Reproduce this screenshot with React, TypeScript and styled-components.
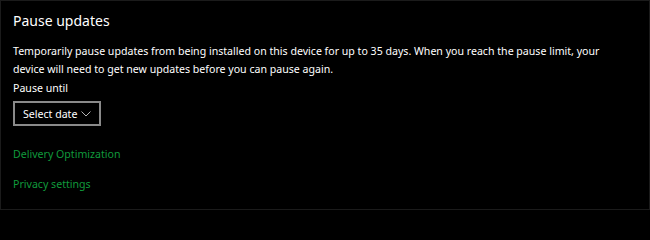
import styled, { createGlobalStyle } from "styled-components";

const GlobalStyle = createGlobalStyle`
  html, body {
    margin: 0;
    padding: 0;
    background: #000;
  }
  body {
    font-family: "Noto Sans", "Open Sans", sans-serif;
  }
`;

export default function App() {
  return (
    <>
      <GlobalStyle />
      <Page>
        <Heading>Pause updates</Heading>
        <Description>
          Temporarily pause updates from being installed on this device for up
          to 35 days. When you reach the pause limit, your
          <br />
          device will need to get new updates before you can pause again.
        </Description>
        <FieldLabel>Pause until</FieldLabel>
        <DateSelect>
          <span>Select date</span>
          <svg width="10" height="6" viewBox="0 0 10 6">
            <path d="M0.5 0.5 L5 5 L9.5 0.5" fill="none" stroke="#b5b5b5" strokeWidth="1" />
          </svg>
        </DateSelect>
        <Links>
          <LinkText>Delivery Optimization</LinkText>
          <LinkText>Privacy settings</LinkText>
        </Links>
      </Page>
    </>
  );
}

const Page = styled.div`
  box-sizing: border-box;
  width: 650px;
  height: 210px;
  padding: 10px 12px 0 12px;
  border: 1px solid #1b1b1b;
  background: #000;
  color: #fff;
  overflow: hidden;
`;
const Heading = styled.h2`
  margin: 0;
  font-size: 14px;
  font-weight: 400;
  line-height: 20px;
`;
const Description = styled.p`
  margin: 11px 0 0 0;
  width: 622px;
  font-size: 10.6px;
  line-height: 18px;
  white-space: normal;
`;
const FieldLabel = styled.div`
  margin-top: 1px;
  font-size: 10.6px;
  line-height: 18px;
`;
const DateSelect = styled.button`
  box-sizing: border-box;
  margin-top: 4px;
  height: 25px;
  width: 88px;
  padding: 0 8px 0 8px;
  display: flex;
  align-items: center;
  justify-content: space-between;
  white-space: nowrap;
  background: #000;
  border: 2px solid #8a8a8a;
  color: #fff;
  font-family: inherit;
  font-size: 10.6px;
  cursor: pointer;
`;
const Links = styled.div`
  display: flex;
  flex-direction: column;
  gap: 12px;
  margin-top: 19px;
`;
const LinkText = styled.a`
  font-size: 10.6px;
  line-height: 18px;
  color: #109a3c;
  cursor: pointer;
`;
